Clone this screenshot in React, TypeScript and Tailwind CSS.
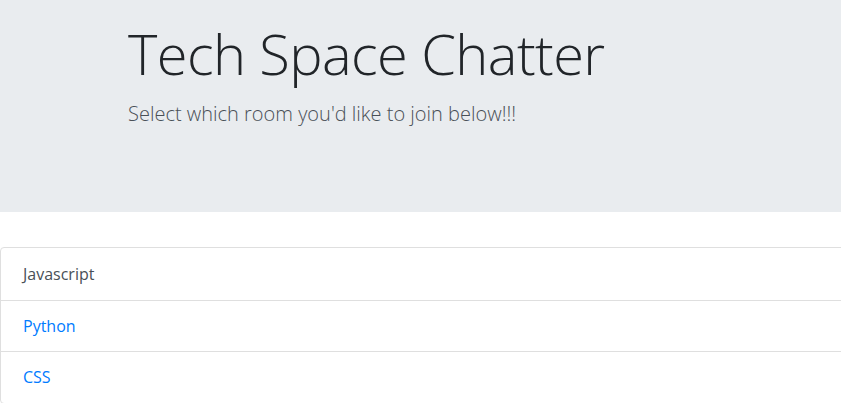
import React from "react";

const rooms = [
  { name: "Javascript", active: true },
  { name: "Python", active: false },
  { name: "CSS", active: false },
];

const App = () => {
  return (
    <div className="min-h-[403px] bg-white overflow-hidden font-['Open_Sans',sans-serif]">
      <div className="h-[212px] bg-[#e9ecef] pl-[128px] pt-[20px]">
        <h1 className="text-[56px] leading-[67px] font-light text-[#212529] tracking-[-0.6px]">
          Tech Space Chatter
        </h1>
        <p className="mt-[12px] text-[20px] leading-[30px] font-light text-[#495057]">
          Select which room you'd like to join below!!!
        </p>
      </div>
      <div className="mt-[35px] w-[calc(100%+10px)] border border-[#dfdfdf] rounded-l-[4px]">
        {rooms.map((room, idx) => (
          <div
            key={idx}
            className={`h-[51.5px] flex items-center px-[22px] text-[16px] ${
              idx > 0 ? "border-t border-[#dfdfdf]" : ""
            } ${room.active ? "text-[#495057]" : "text-[#007bff]"}`}
          >
            {room.name}
          </div>
        ))}
      </div>
    </div>
  );
};

export default App;
